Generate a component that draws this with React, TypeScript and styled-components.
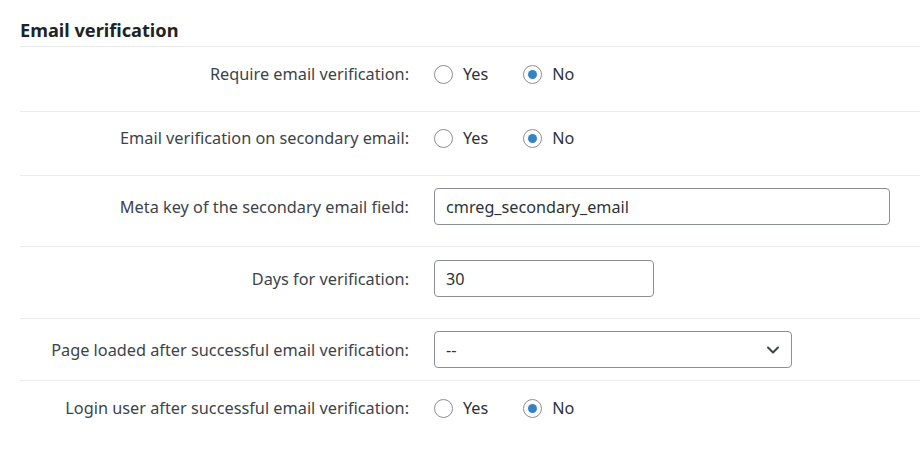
import * as React from 'react'
import styled, { createGlobalStyle } from 'styled-components'

const GlobalStyle = createGlobalStyle`
  html, body {
    margin: 0;
    padding: 0;
    background: #fff;
  }
  body {
    font-family: "Noto Sans", "Open Sans", sans-serif;
    color: #3c434a;
  }
`

const Page = styled.div`
  width: 920px;
  height: 450px;
  box-sizing: border-box;
  padding: 19px 0 0 20px;
  overflow: hidden;
`

const Heading = styled.h2`
  margin: 0;
  padding-bottom: 5px;
  font-size: 18.2px;
  font-weight: 700;
  color: #1d2327;
  line-height: 22px;
  border-bottom: 1px solid #ebebeb;
`

const Row = styled.div<{ $top: number; $bottom: number }>`
  display: grid;
  grid-template-columns: 389px 1fr;
  column-gap: 25px;
  align-items: center;
  padding: ${p => p.$top}px 0 ${p => p.$bottom}px;
  border-bottom: 1px solid #ebebeb;
  &:last-child {
    border-bottom: none;
  }
`

const Label = styled.label`
  text-align: right;
  font-size: 16.3px;
  line-height: 22px;
  color: #3c434a;
`

const RadioGroup = styled.div`
  display: flex;
  align-items: center;
  gap: 35px;
`

const RadioOption = styled.label`
  display: flex;
  align-items: center;
  gap: 10px;
  font-size: 16.2px;
  line-height: 22px;
  color: #2c3338;
`

const RadioCircle = styled.span<{ $checked?: boolean }>`
  width: 19px;
  height: 19px;
  box-sizing: border-box;
  border: 1px solid #8c8f94;
  border-radius: 50%;
  display: flex;
  align-items: center;
  justify-content: center;
  background: #fff;
  &::after {
    content: '';
    width: 9px;
    height: 9px;
    border-radius: 50%;
    background: ${p => (p.$checked ? '#3582c4' : 'transparent')};
  }
`

const TextInput = styled.div<{ $width: number }>`
  width: ${p => p.$width}px;
  height: 37px;
  box-sizing: border-box;
  border: 1px solid #8c8f94;
  border-radius: 4px;
  padding: 0 11px;
  display: flex;
  align-items: center;
  font-size: 16.2px;
  color: #2c3338;
`

const Select = styled(TextInput)`
  justify-content: space-between;
  padding-right: 10px;
`

type YesNoProps = { value: boolean }

const YesNo = ({ value }: YesNoProps) => (
  <RadioGroup>
    <RadioOption>
      <RadioCircle $checked={value} />
      Yes
    </RadioOption>
    <RadioOption>
      <RadioCircle $checked={!value} />
      No
    </RadioOption>
  </RadioGroup>
)

const Chevron = () => (
  <svg width="16" height="16" viewBox="0 0 16 16" fill="none">
    <path d="M3 5.5 L8 10.5 L13 5.5" stroke="#3c434a" strokeWidth="2" strokeLinecap="round" strokeLinejoin="round" />
  </svg>
)

export default function App() {
  return (
    <Page>
      <GlobalStyle />
      <Heading>Email verification</Heading>
      <Row $top={16} $bottom={26}>
        <Label>Require email verification:</Label>
        <YesNo value={false} />
      </Row>
      <Row $top={15} $bottom={26}>
        <Label>Email verification on secondary email:</Label>
        <YesNo value={false} />
      </Row>
      <Row $top={12} $bottom={21}>
        <Label>Meta key of the secondary email field:</Label>
        <TextInput $width={456}>cmreg_secondary_email</TextInput>
      </Row>
      <Row $top={13} $bottom={21}>
        <Label>Days for verification:</Label>
        <TextInput $width={220}>30</TextInput>
      </Row>
      <Row $top={12} $bottom={12}>
        <Label>Page loaded after successful email verification:</Label>
        <Select $width={358}>
          --
          <Chevron />
        </Select>
      </Row>
      <Row $top={16} $bottom={26}>
        <Label>Login user after successful email verification:</Label>
        <YesNo value={false} />
      </Row>
    </Page>
  )
}
